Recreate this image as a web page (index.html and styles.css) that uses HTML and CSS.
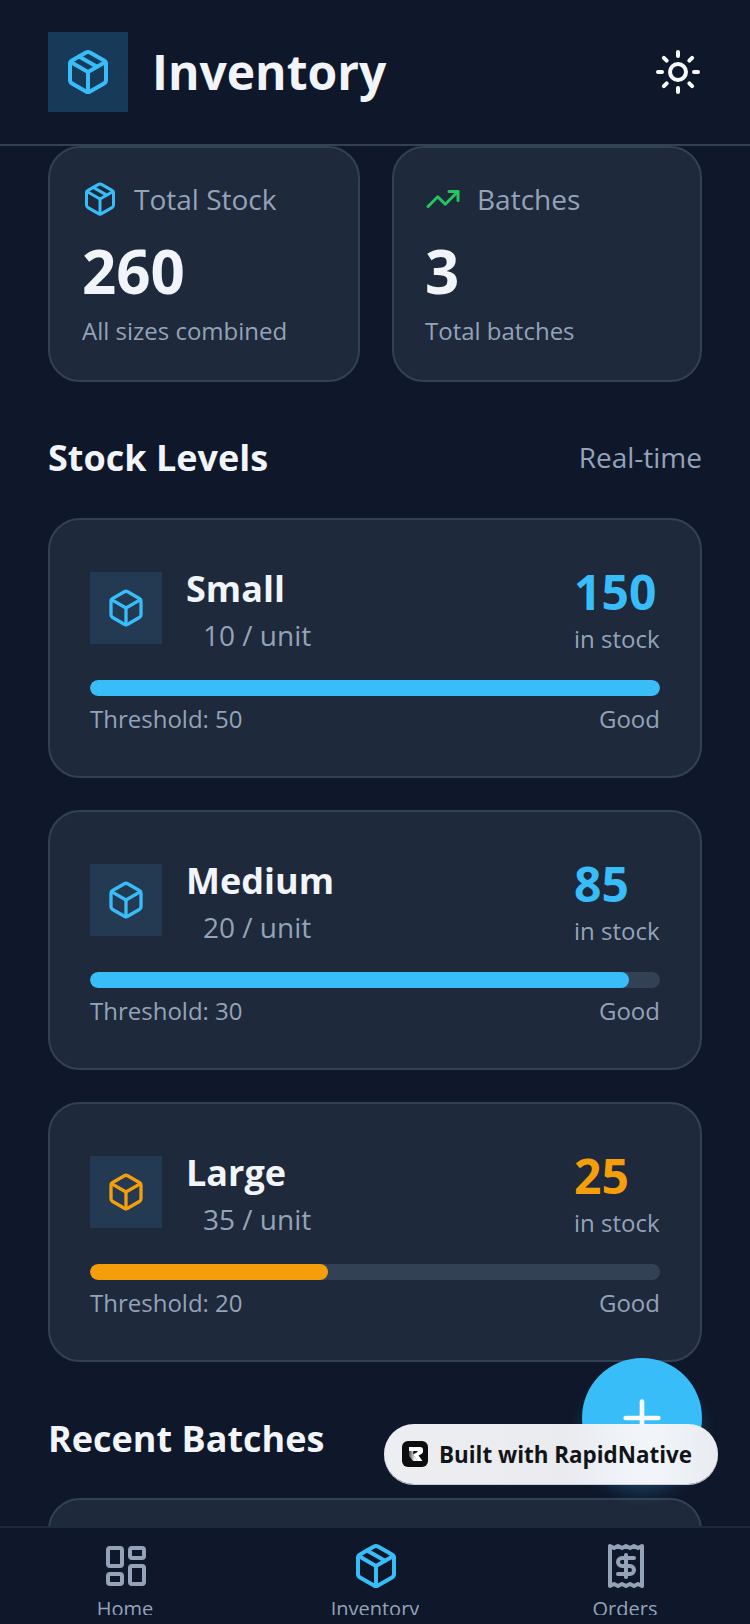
FILE: index.html
```html
<!DOCTYPE html>
<html lang="en">
<head>
<meta charset="utf-8">
<title>Inventory</title>
<link rel="stylesheet" href="styles.css">
</head>
<body>
<svg class="defs" width="0" height="0" aria-hidden="true">
  <symbol id="pkg" viewBox="0 0 24 24"><path d="M11 21.73a2 2 0 0 0 2 0l7-4A2 2 0 0 0 21 16V8a2 2 0 0 0-1-1.73l-7-4a2 2 0 0 0-2 0l-7 4A2 2 0 0 0 3 8v8a2 2 0 0 0 1 1.73z"/><path d="M12 22V12"/><path d="m3.3 7 8.7 5 8.7-5"/><path d="m7.5 4.27 9 5.15"/></symbol>
  <symbol id="box" viewBox="0 0 24 24"><path d="M21 8a2 2 0 0 0-1-1.73l-7-4a2 2 0 0 0-2 0l-7 4A2 2 0 0 0 3 8v8a2 2 0 0 0 1 1.73l7 4a2 2 0 0 0 2 0l7-4A2 2 0 0 0 21 16Z"/><path d="m3.3 7 8.7 5 8.7-5"/><path d="M12 22V12"/></symbol>
</svg>
<div class="app">
  <header class="header">
    <div class="brand">
      <div class="brand-icon"><svg class="ic ic-48 sky"><use href="#pkg"/></svg></div>
      <h1 class="title">Inventory</h1>
    </div>
    <svg class="ic ic-48 white" viewBox="0 0 24 24"><circle cx="12" cy="12" r="4"/><path d="M12 2v2"/><path d="M12 20v2"/><path d="m4.93 4.93 1.41 1.41"/><path d="m17.66 17.66 1.41 1.41"/><path d="M2 12h2"/><path d="M20 12h2"/><path d="m6.34 17.66-1.41 1.41"/><path d="m19.07 4.93-1.41 1.41"/></svg>
  </header>
  <main class="scroll">
    <section class="stats">
      <div class="card stat">
        <div class="stat-head"><svg class="ic ic-36 sky"><use href="#pkg"/></svg><span>Total Stock</span></div>
        <div class="stat-num">260</div>
        <div class="stat-sub">All sizes combined</div>
      </div>
      <div class="card stat">
        <div class="stat-head"><svg class="ic ic-36 green" viewBox="0 0 24 24"><path d="M22 7 13.5 15.5 8.5 10.5 2 17"/><path d="M16 7h6v6"/></svg><span>Batches</span></div>
        <div class="stat-num">3</div>
        <div class="stat-sub">Total batches</div>
      </div>
    </section>
    <div class="sec-head"><h2 class="sec-title">Stock Levels</h2><span class="sec-note">Real-time</span></div>
    <section class="levels">
      <article class="card level">
        <div class="level-top">
          <div class="level-icon"><svg class="ic ic-40 sky"><use href="#box"/></svg></div>
          <div class="level-info"><div class="level-name">Small</div><div class="level-price">10 / unit</div></div>
          <div class="level-count"><div class="count sky-t">150</div><div class="count-sub">in stock</div></div>
        </div>
        <div class="track"><div class="fill sky-b" style="width:100%"></div></div>
        <div class="level-foot"><span>Threshold: 50</span><span>Good</span></div>
      </article>
      <article class="card level">
        <div class="level-top">
          <div class="level-icon"><svg class="ic ic-40 sky"><use href="#box"/></svg></div>
          <div class="level-info"><div class="level-name">Medium</div><div class="level-price">20 / unit</div></div>
          <div class="level-count"><div class="count sky-t">85</div><div class="count-sub">in stock</div></div>
        </div>
        <div class="track"><div class="fill sky-b" style="width:94.5%"></div></div>
        <div class="level-foot"><span>Threshold: 30</span><span>Good</span></div>
      </article>
      <article class="card level">
        <div class="level-top">
          <div class="level-icon"><svg class="ic ic-40 amber"><use href="#box"/></svg></div>
          <div class="level-info"><div class="level-name">Large</div><div class="level-price">35 / unit</div></div>
          <div class="level-count"><div class="count amber-t">25</div><div class="count-sub">in stock</div></div>
        </div>
        <div class="track"><div class="fill amber-b" style="width:41.8%"></div></div>
        <div class="level-foot"><span>Threshold: 20</span><span>Good</span></div>
      </article>
    </section>
    <h2 class="sec-title recent">Recent Batches</h2>
    <div class="card batch"></div>
  </main>
  <nav class="nav">
    <div class="tab">
      <svg class="ic ic-48 slate" viewBox="0 0 24 24"><rect x="3" y="3" width="7" height="9" rx="1"/><rect x="14" y="3" width="7" height="5" rx="1"/><rect x="14" y="12" width="7" height="9" rx="1"/><rect x="3" y="16" width="7" height="5" rx="1"/></svg>
      <span class="tab-label">Home</span>
    </div>
    <div class="tab">
      <svg class="ic ic-48 sky"><use href="#pkg"/></svg>
      <span class="tab-label sky-t">Inventory</span>
    </div>
    <div class="tab">
      <svg class="ic ic-48 slate" viewBox="0 0 24 24"><path d="M4 2v20l2-1 2 1 2-1 2 1 2-1 2 1 2-1 2 1V2l-2 1-2-1-2 1-2-1-2 1-2-1-2 1Z"/><path d="M16 8h-6a2 2 0 1 0 0 4h4a2 2 0 1 1 0 4H8"/><path d="M12 17.5v-11"/></svg>
      <span class="tab-label">Orders</span>
    </div>
  </nav>
  <button class="fab"><svg class="ic ic-56 white" viewBox="0 0 24 24"><path d="M5 12h14"/><path d="M12 5v14"/></svg></button>
  <div class="pill">
    <svg class="pill-logo" viewBox="0 0 26 26"><defs><linearGradient id="rg" x1="0" x2="1" y1="0" y2="0"><stop offset="0" stop-color="#444"/><stop offset=".7" stop-color="#fff"/></linearGradient></defs><rect width="26" height="26" rx="6" fill="#0d0d0f"/><path d="M7 6h11a3 3 0 0 1 3 3v1.500a3 3 0 0 1-1.600 2.600L16.500 14.500 20.500 20h-5L11 13.500l4.500-2.500V10H7z" fill="#fff"/><path d="M7 10h4.500l-.5 3.500L15.500 20H11l-4-5z" fill="url(#rg)"/></svg>
    <span>Built with RapidNative</span>
  </div>
</div>
</body>
</html>
```
FILE: styles.css
```css
* { box-sizing: border-box; margin: 0; padding: 0; }
html, body { width: 750px; height: 1624px; overflow: hidden; background: #0f172a; }
body { font-family: "Open Sans", "Noto Sans", sans-serif; color: #f1f5f9; }
.defs { position: absolute; }
.app { position: relative; width: 750px; height: 1624px; display: flex; flex-direction: column; overflow: hidden; background: #0f172a; }

.ic { display: block; fill: none; stroke: currentColor; stroke-width: 2; stroke-linecap: round; stroke-linejoin: round; flex: none; }
.ic-36 { width: 36px; height: 36px; }
.ic-40 { width: 40px; height: 40px; }
.ic-48 { width: 48px; height: 48px; }
.ic-56 { width: 56px; height: 56px; }
.sky { color: #38bdf8; }
.white { color: #f8fafc; }
.green { color: #22c55e; }
.amber { color: #f59e0b; }
.slate { color: #94a3b8; }
.sky-t { color: #38bdf8; }
.amber-t { color: #f59e0b; }
.sky-b { background: #38bdf8; }
.amber-b { background: #f59e0b; }

.header { height: 146px; flex: none; display: flex; align-items: flex-start; justify-content: space-between; padding: 32px 48px 0; border-bottom: 2px solid #334155; }
.brand { display: flex; align-items: center; gap: 24px; }
.brand-icon { width: 80px; height: 80px; background: #173a58; display: flex; align-items: center; justify-content: center; }
.title { font-size: 48px; line-height: 80px; font-weight: 700; color: #f1f5f9; }
.header > .ic { margin-top: 16px; }

.scroll { flex: 1; min-height: 0; overflow: hidden; padding: 0 48px; }
.card { background: #1e293b; border: 2px solid #334155; border-radius: 32px; }
.stats { display: flex; gap: 32px; }
.stat { flex: 1; height: 236px; padding: 29px 32px 0; }
.stats .stat:first-child { flex: 0 0 312px; }
.stats .stat:last-child { flex: 0 0 310px; padding-left: 31px; }
.stat-head { display: flex; align-items: center; gap: 16px; height: 44px; font-size: 28px; line-height: 44px; color: #94a3b8; }
.stat-num { font-size: 60px; line-height: 72px; font-weight: 700; margin-top: 14px; color: #f1f5f9; }
.stat-sub { font-size: 24px; line-height: 32px; color: #94a3b8; margin-top: 8px; }

.sec-head { display: flex; align-items: center; justify-content: space-between; margin-top: 48px; height: 56px; }
.sec-title { font-size: 36px; line-height: 56px; font-weight: 700; color: #f1f5f9; }
.sec-note { font-size: 28px; line-height: 54px; height: 56px; color: #94a3b8; }
.levels { display: flex; flex-direction: column; gap: 32px; margin-top: 32px; }
.level { height: 260px; padding: 52px 40px 0; }
.level-top { display: flex; align-items: flex-start; height: 72px; }
.level-icon { width: 72px; height: 72px; background: #233a52; display: flex; align-items: center; justify-content: center; margin-right: 24px; }
.level-info { flex: 1; margin-top: -7px; }
.level-name { font-size: 36px; line-height: 48px; font-weight: 700; color: #f1f5f9; }
.level-price { font-size: 28px; line-height: 40px; color: #94a3b8; padding-left: 17px; margin-top: 2px; }
.level-count { width: 86px; margin-top: -8px; }
.count { font-size: 48px; line-height: 56px; font-weight: 700; }
.count-sub { font-size: 24px; line-height: 32px; color: #94a3b8; white-space: nowrap; margin-top: 3px; }
.track { height: 16px; border-radius: 8px; background: #334155; margin-top: 36px; overflow: hidden; }
.fill { height: 100%; border-radius: 8px; }
.level-foot { display: flex; justify-content: space-between; font-size: 24px; line-height: 32px; color: #94a3b8; margin-top: 7px; }

.recent { margin-top: 49px; }
.batch { height: 120px; margin-top: 31px; }

.nav { position: absolute; left: 0; right: 0; bottom: 0; height: 98px; background: #0f172a; border-top: 2px solid #1e293b; display: flex; justify-content: space-around; padding: 14px 0 0; }
.tab { display: flex; flex-direction: column; align-items: center; width: 160px; }
.tab .ic { margin-left: 2px; }
.tab-label { font-size: 20px; line-height: 30px; color: #94a3b8; margin-top: 4px; height: 21px; overflow: hidden; }

.fab { position: absolute; left: 582px; top: 1358px; width: 120px; height: 120px; border: 0; border-radius: 60px; background: #38bdf8; display: flex; align-items: center; justify-content: center; box-shadow: 0 16px 20px -4px rgba(56,189,248,.3); }
.pill { position: absolute; left: 384px; top: 1424px; width: 334px; height: 60px; border-radius: 30px; background: linear-gradient(90deg, #eceef1, #e9ebef 55%, #f2f6fb 80%, #e8ebef); display: flex; align-items: center; gap: 11px; padding-left: 18px; box-shadow: 0 1px 0 #c4ced8; color: #121418; font-size: 22.4px; font-weight: 700; }
.pill-logo { width: 26px; height: 26px; flex: none; }
```
